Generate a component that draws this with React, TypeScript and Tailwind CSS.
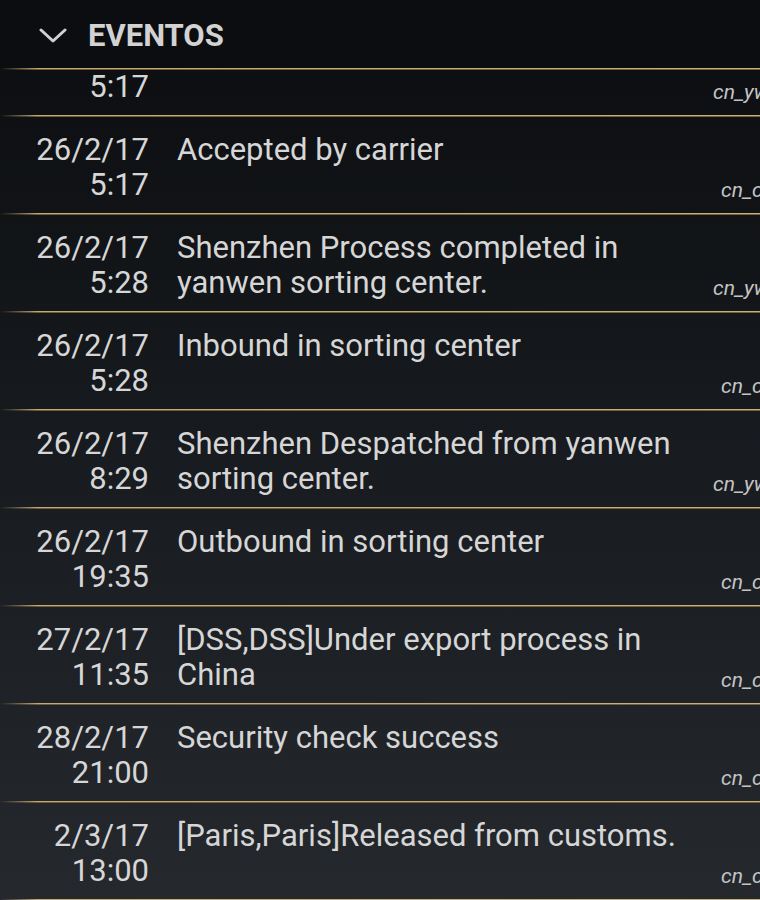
import React from "react";

type Row = { date: string; time: string; desc: string; src: string; alt: boolean };

const rows: Row[] = [
  { date: "26/2/17", time: "5:17", desc: "Shenzhen Pickup", src: "cn_ywen", alt: false },
  { date: "26/2/17", time: "5:17", desc: "Accepted by carrier", src: "cn_cainiao", alt: true },
  { date: "26/2/17", time: "5:28", desc: "Shenzhen Process completed in yanwen sorting center.", src: "cn_ywen", alt: false },
  { date: "26/2/17", time: "5:28", desc: "Inbound in sorting center", src: "cn_cainiao", alt: true },
  { date: "26/2/17", time: "8:29", desc: "Shenzhen Despatched from yanwen sorting center.", src: "cn_ywen", alt: false },
  { date: "26/2/17", time: "19:35", desc: "Outbound in sorting center", src: "cn_cainiao", alt: true },
  { date: "27/2/17", time: "11:35", desc: "[DSS,DSS]Under export process in China", src: "cn_cainiao", alt: true },
  { date: "28/2/17", time: "21:00", desc: "Security check success", src: "cn_cainiao", alt: true },
  { date: "2/3/17", time: "13:00", desc: "[Paris,Paris]Released from customs.", src: "cn_cainiao", alt: true },
];

function GoldLine() {
  return (
    <div className="w-full">
      <div className="h-px w-full bg-linear-to-r from-transparent via-[#c4a970] via-[5%] to-[#c9b07a]" />
      <div className="h-px w-full bg-linear-to-r from-transparent via-[#6f5b37] via-[5%] to-[#75603a]" />
    </div>
  );
}

function EventRow({ r }: { r: Row }) {
  return (
    <div>
      <div className="flex h-[96px] pt-[15px] text-[31px] leading-[35px] text-[#d6d6d6]">
        <div className="w-[149px] shrink-0 text-right">
          <div>{r.date}</div>
          <div>{r.time}</div>
        </div>
        <div className="ml-[28px] w-[520px] shrink-0">{r.desc}</div>
        <div
          className={
            r.alt
              ? "ml-[24px] shrink-0 self-end whitespace-nowrap pb-[11px] text-[21px] italic leading-[24px] text-[#c4c4c4]"
              : "ml-[16px] shrink-0 self-end whitespace-nowrap pb-[11px] text-[21px] italic leading-[24px] text-[#c4c4c4]"
          }
        >
          {r.src}
        </div>
      </div>
      <GoldLine />
    </div>
  );
}

export default function App() {
  return (
    <div
      className="h-[900px] w-[760px] overflow-hidden bg-linear-to-b from-[#0b0d10] to-[#25292e]"
      style={{ fontFamily: "Roboto, 'Noto Sans', sans-serif" }}
    >
      <div className="flex h-[68px] items-center bg-[#0b0d10] pt-[4px]">
        <svg width="28" height="16" viewBox="0 0 28 16" className="ml-[39px]">
          <polyline points="2,2 14,13 26,2" fill="none" stroke="#d0d0d0" strokeWidth="3" strokeLinecap="round" strokeLinejoin="round" />
        </svg>
        <div className="ml-[21px] text-[31px] font-bold leading-[34px] text-[#d2d2d2]">EVENTOS</div>
      </div>
      <GoldLine />
      <div className="overflow-hidden">
        <div className="mt-[-51px]">
          {rows.map((r, i) => (
            <EventRow key={i} r={r} />
          ))}
        </div>
      </div>
    </div>
  );
}
